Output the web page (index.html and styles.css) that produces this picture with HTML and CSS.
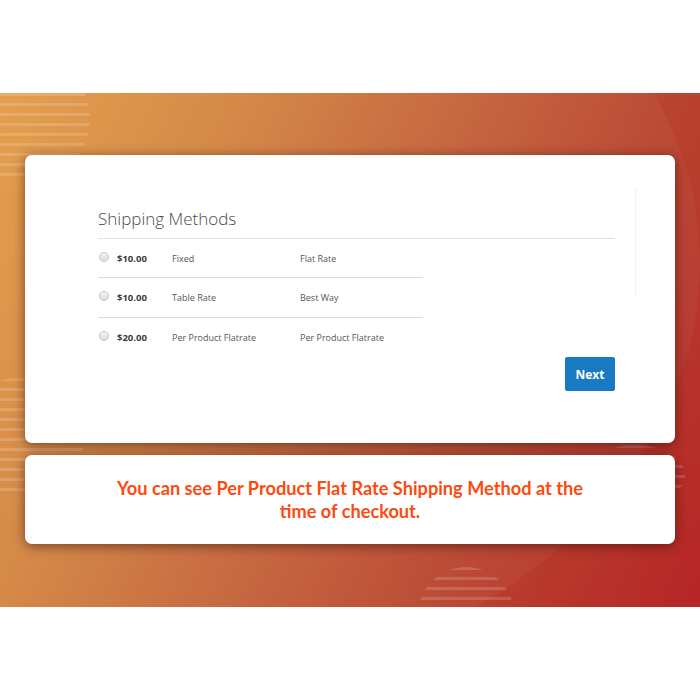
FILE: index.html
```html
<!DOCTYPE html>
<html lang="en">
<head>
    <meta charset="UTF-8">
    <meta name="viewport" content="width=device-width, initial-scale=1.0">
    <title>Per Product Flat Rate Shipping</title>
    <link rel="stylesheet" href="styles.css">
</head>
<body>
    <section class="banner">
        <!-- striped half circles in the background -->
        <div class="rings rings-top"></div>
        <div class="rings rings-left"></div>
        <div class="rings rings-right"></div>
        <div class="rings rings-bottom"></div>
        <div class="glow"></div>

        <div class="card checkout">
            <div class="checkout-main">
                <h2 class="step-title">Shipping Methods</h2>
                <table class="methods">
                    <tbody>
                        <tr>
                            <td class="col-radio"><span class="radio"></span></td>
                            <td class="col-price">$10.00</td>
                            <td class="col-method">Fixed</td>
                            <td class="col-carrier">Flat Rate</td>
                        </tr>
                        <tr>
                            <td class="col-radio"><span class="radio"></span></td>
                            <td class="col-price">$10.00</td>
                            <td class="col-method">Table Rate</td>
                            <td class="col-carrier">Best Way</td>
                        </tr>
                        <tr>
                            <td class="col-radio"><span class="radio"></span></td>
                            <td class="col-price">$20.00</td>
                            <td class="col-method">Per Product Flatrate</td>
                            <td class="col-carrier">Per Product Flatrate</td>
                        </tr>
                    </tbody>
                </table>
                <div class="actions">
                    <button class="btn-next">Next</button>
                </div>
            </div>
            <div class="checkout-sidebar"></div>
        </div>

        <div class="card note">
            <p>You can see Per Product Flat Rate Shipping Method at the<br>time of checkout.</p>
        </div>
    </section>
</body>
</html>
```

FILE: styles.css
```css
body {
    margin: 0;
    padding: 0;
    background: #fff;
    font-family: "Open Sans", Arial, sans-serif;
}
.banner {
    position: relative;
    overflow: hidden;
    margin-top: 93px;
    height: 514px;
    padding: 62px 25px 0;
    box-sizing: border-box;
    background: linear-gradient(115deg, #e39b46 0%, #d48642 25%, #c4623a 50%, #b9442e 72%, #b62527 100%);
}
.glow {
    position: absolute;
    left: -420px;
    top: -260px;
    width: 1120px;
    height: 860px;
    border-radius: 50%;
    background: rgba(255, 255, 255, 0.04);
}
.rings {
    position: absolute;
    border-radius: 50%;
    background: repeating-linear-gradient(to bottom, rgba(255, 255, 255, 0.16) 0 3px, transparent 3px 10px);
}
.rings-top {
    left: -40px;
    top: -40px;
    width: 130px;
    height: 130px;
    clip-path: inset(40px 0 0 0);
}
.rings-left {
    left: -45px;
    top: 285px;
    width: 130px;
    height: 116px;
}
.rings-right {
    left: 585px;
    top: 352px;
    width: 100px;
    height: 60px;
}
.rings-bottom {
    left: 418px;
    top: 474px;
    width: 96px;
    height: 96px;
}
.card {
    position: relative;
    z-index: 1;
    background: #fff;
    border-radius: 7px;
    box-shadow: 0 2px 12px rgba(40, 10, 0, 0.55);
}
.checkout {
    height: 288px;
    box-sizing: border-box;
    padding: 32px 0 0 73px;
    display: flex;
    gap: 20px;
}
.checkout-main {
    width: 517px;
}
.checkout-sidebar {
    width: 0;
    height: 111px;
    border-left: 1px solid #f2f2f2;
}
.step-title {
    margin: 20px 0 0;
    padding-bottom: 8px;
    border-bottom: 1px solid #e0e0e0;
    font-size: 17px;
    line-height: 23px;
    font-weight: 300;
    color: #4a4a4a;
}
.methods {
    width: 325px;
    border-collapse: collapse;
    font-size: 9px;
    color: #555;
}
.methods td {
    height: 38px;
    padding: 0;
    vertical-align: middle;
    text-align: left;
}
.methods tr + tr td {
    height: 39px;
    border-top: 1px solid #dcdcdc;
}
.col-radio {
    width: 19px;
}
.col-price {
    width: 55px;
    font-weight: 700;
    font-size: 9.5px;
    color: #3a3a3a;
}
.col-method {
    width: 128px;
}
.radio {
    display: block;
    width: 8px;
    height: 8px;
    margin: -3px 0 0 1px;
    border-radius: 50%;
    border: 1px solid #c4c4c4;
    background: linear-gradient(#f4f4f4, #dcdcdc);
}
.actions {
    display: flex;
    justify-content: flex-end;
}
.btn-next {
    width: 50px;
    height: 34px;
    border: 1px solid #1979c3;
    border-radius: 2px;
    background: #1979c3;
    color: #fff;
    font-family: "Open Sans", Arial, sans-serif;
    font-size: 12px;
    font-weight: 700;
    padding: 0;
}
.note {
    margin-top: 12px;
    height: 89px;
    display: flex;
    align-items: center;
    justify-content: center;
}
.note p {
    margin: 0;
    text-align: center;
    font-family: Lato, "Open Sans", sans-serif;
    font-weight: 700;
    font-size: 18.2px;
    line-height: 23px;
    color: #fd4a0f;
}
```
